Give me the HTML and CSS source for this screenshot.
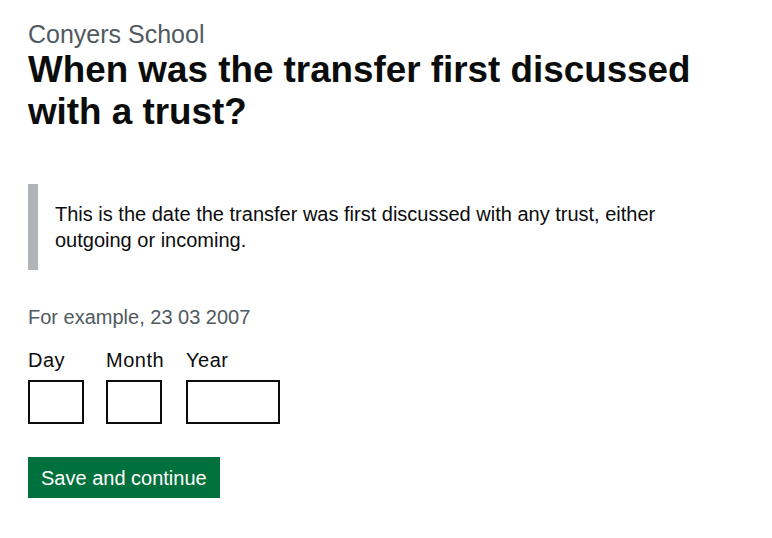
FILE: index.html
```html
<!DOCTYPE html>
<html lang="en">
<head>
<meta charset="utf-8">
<title>When was the transfer first discussed with a trust?</title>
<link rel="stylesheet" href="styles.css">
</head>
<body>
<main class="page">
  <span class="caption">Conyers School</span>
  <h1 class="heading">When was the transfer first discussed with a trust?</h1>
  <div class="inset">
    <p>This is the date the transfer was first discussed with any trust, either outgoing or incoming.</p>
  </div>
  <div class="hint">For example, 23 03 2007</div>
  <div class="date">
    <div class="date-item">
      <label class="label" for="d">Day</label>
      <input class="input w2" id="d" type="text">
    </div>
    <div class="date-item">
      <label class="label" for="m">Month</label>
      <input class="input w2" id="m" type="text">
    </div>
    <div class="date-item">
      <label class="label" for="y">Year</label>
      <input class="input w4" id="y" type="text">
    </div>
  </div>
  <button class="button" type="submit">Save and continue</button>
</main>
</body>
</html>
```

FILE: styles.css
```css
html, body {
  margin: 0;
  padding: 0;
  background: #ffffff;
}
body {
  font-family: "Liberation Sans", Arial, sans-serif;
  color: #0b0c0c;
}
.page {
  padding: 19px 28px 0 28px;
  display: flex;
  flex-direction: column;
  align-items: flex-start;
}
.caption {
  font-size: 25px;
  line-height: 30px;
  color: #505a5f;
}
.heading {
  margin: 0;
  font-size: 36.8px;
  line-height: 42px;
  font-weight: 700;
  max-width: 700px;
}
.inset {
  margin-top: 51px;
  border-left: 10px solid #b1b4b6;
  padding: 17px 0 17px 17px;
}
.inset p {
  margin: 0;
  font-size: 20px;
  line-height: 26px;
  max-width: 612px;
}
.hint {
  margin-top: 34px;
  font-size: 20px;
  line-height: 26px;
  color: #505a5f;
}
.date {
  margin-top: 17px;
  display: flex;
  gap: 22px;
}
.date-item {
  display: flex;
  flex-direction: column;
}
.label {
  font-size: 20px;
  line-height: 26px;
  letter-spacing: 0.5px;
  margin-bottom: 7px;
}
.input {
  box-sizing: border-box;
  height: 44px;
  border: 2px solid #0b0c0c;
  border-radius: 0;
  padding: 5px;
  font: inherit;
  font-size: 20px;
  margin: 0;
  background: #fff;
}
.w2 { width: 56px; }
.w4 { width: 94px; }
.button {
  margin-top: 33px;
  background: #00703c;
  color: #ffffff;
  border: 0;
  border-radius: 0;
  box-shadow: 0 2px 0 #002d18;
  font-family: inherit;
  font-size: 20px;
  line-height: 24px;
  padding: 9px 13px 8px 13px;
  min-width: 191px;
  white-space: nowrap;
  text-align: center;
}
```
